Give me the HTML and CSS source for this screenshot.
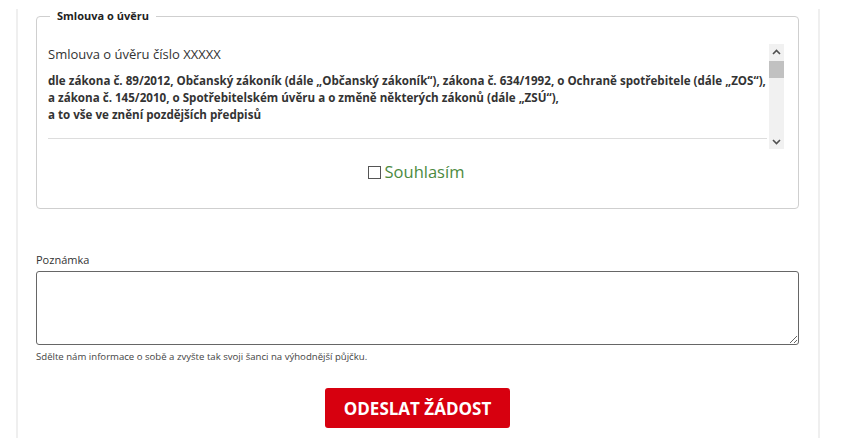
FILE: index.html
```html
<!DOCTYPE html>
<html lang="cs">
<head>
<meta charset="utf-8">
<title>Smlouva o úvěru</title>
<link rel="stylesheet" href="styles.css">
</head>
<body>
<div class="page">
  <fieldset class="contract">
    <legend class="contract-legend">Smlouva o úvěru</legend>
    <div class="scrollbox">
      <div class="scroll-content">
        <h3 class="contract-title">Smlouva o úvěru číslo XXXXX</h3>
        <p class="contract-law">dle zákona č. 89/2012, Občanský zákoník (dále „Občanský zákoník“), zákona č. 634/1992, o Ochraně spotřebitele (dále „ZOS“),<br>a zákona č. 145/2010, o Spotřebitelském úvěru a o změně některých zákonů (dále „ZSÚ“),<br>a to vše ve znění pozdějších předpisů</p>
        <hr class="contract-rule">
      </div>
      <div class="scrollbar">
        <div class="sb-arrow">
          <svg width="9" height="6" viewBox="0 0 9 6"><path d="M1 5 L4.5 1.5 L8 5" fill="none" stroke="#505050" stroke-width="1.6"/></svg>
        </div>
        <div class="sb-track"><div class="sb-thumb"></div></div>
        <div class="sb-arrow">
          <svg width="9" height="6" viewBox="0 0 9 6"><path d="M1 1 L4.5 4.5 L8 1" fill="none" stroke="#505050" stroke-width="1.6"/></svg>
        </div>
      </div>
    </div>
    <label class="agree"><span class="agree-box"></span>Souhlasím</label>
  </fieldset>

  <div class="note">
    <label class="note-label" for="note">Poznámka</label>
    <div class="note-field">
      <textarea id="note" class="note-input"></textarea>
    </div>
    <p class="note-help">Sdělte nám informace o sobě a zvyšte tak svoji šanci na výhodnější půjčku.</p>
  </div>

  <div class="actions">
    <button class="submit" type="button">Odeslat žádost</button>
  </div>
</div>
</body>
</html>
```

FILE: styles.css
```css
html, body {
  margin: 0;
  padding: 0;
  background: #fff;
}

body {
  font-family: "Open Sans", "Liberation Sans", sans-serif;
  color: #333;
}

.page {
  box-sizing: border-box;
  width: 804px;
  min-height: 100vh;
  margin-left: 16px;
  border-left: 2px solid #efefef;
  border-right: 2px solid #efefef;
  padding: 0 19px 8px 18px;
}

.contract {
  margin: 9px 0 0;
  border: 1px solid #cfcfcf;
  border-radius: 4px;
  padding: 21px 14px 25px 11px;
}

.contract-legend {
  font-size: 11px;
  font-weight: 700;
  color: #222;
  padding: 0 7px;
  margin-left: 2px;
  line-height: 14px;
}

.scrollbox {
  display: flex;
  height: 105px;
  overflow: hidden;
}

.scroll-content {
  flex: 1;
  padding: 0 2px 0 0;
}

.contract-title {
  font-size: 13px;
  font-weight: 400;
  line-height: 20px;
  margin: 0;
  color: #333;
}

.contract-law {
  font-size: 11.6px;
  font-weight: 700;
  line-height: 17px;
  margin: 8px 0 0;
  color: #333;
}

.contract-rule {
  border: 0;
  border-top: 1px solid #ddd;
  margin: 15px 0 0;
}

.scrollbar {
  width: 15px;
  background: #f1f1f1;
  display: flex;
  flex-direction: column;
}

.sb-arrow {
  height: 15px;
  display: flex;
  align-items: center;
  justify-content: center;
}

.sb-track {
  flex: 1;
}

.sb-thumb {
  height: 17px;
  margin: 2px 0 0;
  background: #c1c1c1;
}

.agree {
  display: flex;
  align-items: center;
  justify-content: center;
  margin-top: 12px;
  line-height: 22px;
  font-size: 16.5px;
  color: #4c8a3f;
}

.agree-box {
  width: 11px;
  height: 11px;
  border: 1px solid #555;
  margin-right: 4px;
}

.note {
  margin-top: 43px;
}

.note-label {
  display: block;
  font-size: 11px;
  line-height: 15px;
  color: #333;
  margin-bottom: 4px;
}

.note-field {
  display: flex;
}

.note-input {
  flex: 1;
  height: 64px;
  margin: 0;
  padding: 4px;
  border: 1px solid #666;
  border-radius: 3px;
  box-sizing: content-box;
  font-family: inherit;
  resize: vertical;
}

.note-help {
  margin: 5px 0 0;
  font-size: 9.6px;
  line-height: 14px;
  color: #444;
}

.actions {
  display: flex;
  justify-content: center;
  margin-top: 24px;
}

.submit {
  width: 185px;
  height: 40px;
  border: 0;
  border-radius: 3px;
  background: #d7000f;
  color: #fff;
  font-family: "Open Sans", "Liberation Sans", sans-serif;
  font-weight: 700;
  font-size: 17px;
  text-transform: uppercase;
}
```
